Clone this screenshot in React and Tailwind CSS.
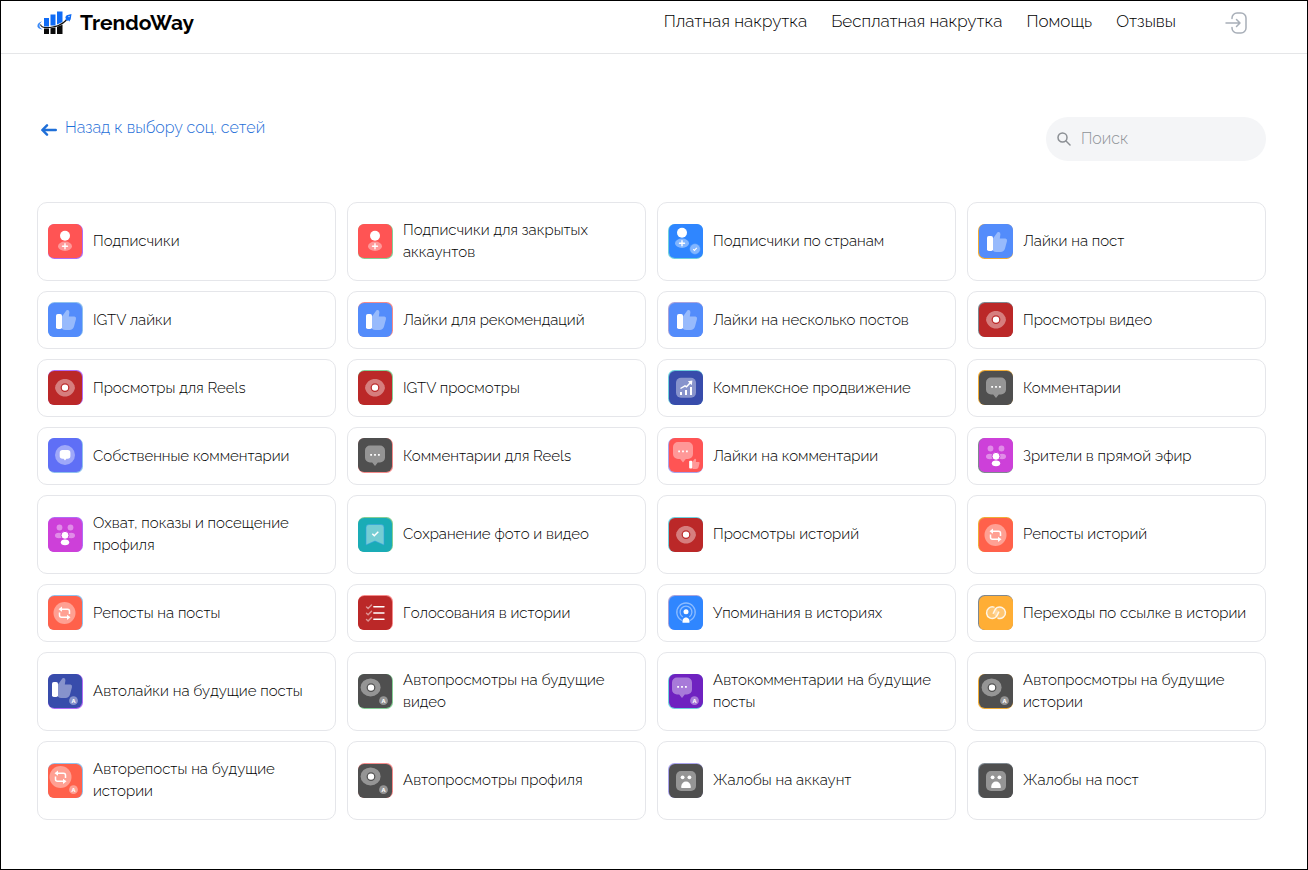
const NAV = ["Платная накрутка", "Бесплатная накрутка", "Помощь", "Отзывы"];

// edge: which sides of the tile show the accent colour (l/r + t/b)
const SERVICES = [
    { title: "Подписчики", icon: "follower", bg: "#ff5454", accent: "#b06cf5", edge: "rb" },
    { title: "Подписчики для закрытых аккаунтов", icon: "follower", bg: "#ff5454", accent: "#84cf95", edge: "rb" },
    { title: "Подписчики по странам", icon: "country", bg: "#2f86ff", accent: "#6fd0dd", edge: "lb" },
    { title: "Лайки на пост", icon: "like", bg: "#538cfb", accent: "#f0ac35", edge: "lb" },
    { title: "IGTV лайки", icon: "like", bg: "#538cfb", accent: "#8fc1ee", edge: "rt" },
    { title: "Лайки для рекомендаций", icon: "like", bg: "#538cfb", accent: "#f58a8a", edge: "rt" },
    { title: "Лайки на несколько постов", icon: "like", bg: "#538cfb", accent: "#a9a3dc", edge: "lt" },
    { title: "Просмотры видео", icon: "eye", bg: "#bb2828", accent: "#7f8890", edge: "lt" },
    { title: "Просмотры для Reels", icon: "eye", bg: "#bb2828", accent: "#b06cf5", edge: "rt" },
    { title: "IGTV просмотры", icon: "eye", bg: "#bb2828", accent: "#84cf95", edge: "rt" },
    { title: "Комплексное продвижение", icon: "growth", bg: "#384cab", accent: "#6fd0dd", edge: "lt" },
    { title: "Комментарии", icon: "comment", bg: "#4f4f4f", accent: "#f0ac35", edge: "lt" },
    { title: "Собственные комментарии", icon: "ownComment", bg: "#5f6ff6", accent: "#8fc1ee", edge: "rb" },
    { title: "Комментарии для Reels", icon: "comment", bg: "#4f4f4f", accent: "#f58a8a", edge: "rb" },
    { title: "Лайки на комментарии", icon: "commentLike", bg: "#ff5454", accent: "#a9a3ec", edge: "lb" },
    { title: "Зрители в прямой эфир", icon: "people", bg: "#cd40d9", accent: "#7f8890", edge: "lb" },
    { title: "Охват, показы и посещение профиля", icon: "people", bg: "#cd40d9", accent: "#b06cf5", edge: "rt" },
    { title: "Сохранение фото и видео", icon: "bookmark", bg: "#1aacb6", accent: "#84cf95", edge: "rt" },
    { title: "Просмотры историй", icon: "eye", bg: "#bb2828", accent: "#6fd0dd", edge: "lt" },
    { title: "Репосты историй", icon: "repost", bg: "#ff614b", accent: "#f0ac35", edge: "lt" },
    { title: "Репосты на посты", icon: "repost", bg: "#ff614b", accent: "#8fc1ee", edge: "rt" },
    { title: "Голосования в истории", icon: "poll", bg: "#bb2828", accent: "#f58a8a", edge: "rt" },
    { title: "Упоминания в историях", icon: "mention", bg: "#2f86ff", accent: "#a9a3dc", edge: "lt" },
    { title: "Переходы по ссылке в истории", icon: "link", bg: "#ffae35", accent: "#7f8890", edge: "lt" },
    { title: "Автолайки на будущие посты", icon: "like", auto: true, bg: "#384cab", accent: "#b06cf5", edge: "rb" },
    { title: "Автопросмотры на будущие видео", icon: "eye", auto: true, bg: "#4f4f4f", accent: "#84cf95", edge: "rb" },
    { title: "Автокомментарии на будущие посты", icon: "comment", auto: true, bg: "#6f22c0", accent: "#6fd0dd", edge: "lb" },
    { title: "Автопросмотры на будущие истории", icon: "eye", auto: true, bg: "#4f4f4f", accent: "#f0ac35", edge: "lb" },
    { title: "Авторепосты на будущие истории", icon: "repost", auto: true, bg: "#ff614b", accent: "#8fc1ee", edge: "rt" },
    { title: "Автопросмотры профиля", icon: "eye", auto: true, bg: "#4f4f4f", accent: "#f58a8a", edge: "rt" },
    { title: "Жалобы на аккаунт", icon: "complaint", bg: "#4f4f4f", accent: "#a9a3ec", edge: "lt" },
    { title: "Жалобы на пост", icon: "complaint", bg: "#4f4f4f", accent: "#7f8890", edge: "lt" },
];

const BUBBLE = "M12 7.5h10a5 5 0 0 1 5 5v7a5 5 0 0 1-5 5h-2.2L17 28l-2.8-3.5H12a5 5 0 0 1-5-5v-7a5 5 0 0 1 5-5Z";
const THUMB = "M14 14.5 17.6 9.4Q18.6 7.8 19.8 8q1.8.4 1.6 2.6l-.6 4h5.6q2 .2 1.6 2.4l-2 7.4Q25 27.800 21.500 28h-4Q15.200 28 14 26.800Z";
const EYE = "M17 9c4.6 0 7.6 2.4 9.4 6.3q1 2.3 0 4.6C24.6 23.8 21.6 26.4 17 26.4S9.4 23.8 7.6 19.9q-1-2.3 0-4.6C9.4 11.4 12.4 9 17 9Z";

function Thumb() {
    return (
        <>
            <rect x="8" y="12" width="6" height="15" rx="1.8" fill="#fff" />
            <path d={THUMB} fill="#fff" fillOpacity=".4" />
        </>
    );
}

function Follower() {
    return (
        <>
            <circle cx="17" cy="11.7" r="5" fill="#fff" />
            <ellipse cx="17" cy="22.3" rx="7" ry="4.7" fill="#fff" fillOpacity=".4" />
            <path d="M17 19.8v5M14.5 22.3h5" stroke="#fff" strokeWidth="1.4" strokeLinecap="round" />
        </>
    );
}

function Bubble() {
    return (
        <>
            <path d={BUBBLE} fill="#fff" fillOpacity=".4" />
            <path d="M12.2 16h1.8v1.8h-1.8zM16.1 16h1.8v1.8h-1.8zM20 16h1.8v1.8H20z" fill="#fff" />
        </>
    );
}

const GLYPHS = {
    follower: () => <Follower />,
    country: ({ bg }) => (
        <>
            <g transform="translate(-4 -3)">
                <Follower />
            </g>
            <circle cx="26" cy="25" r="5.4" fill="#fff" fillOpacity=".4" stroke={bg} strokeWidth=".5" />
            <path d="m24.2 25.2 1.2 1.2 2.4-2.6" fill="none" stroke="#fff" strokeWidth="1.1" />
        </>
    ),
    like: () => <Thumb />,
    eye: ({ bg, auto }) => (
        <>
            {auto
                ? <ellipse cx="16.6" cy="17.4" rx="10" ry="9" fill="#fff" fillOpacity=".4" />
                : <path d={EYE} fill="#fff" fillOpacity=".4" />}
            <circle cx="17" cy="17.6" r="3.8" fill="#fff" stroke={bg} strokeWidth="1.2" />
        </>
    ),
    growth: () => (
        <>
            <rect x="7" y="7.7" width="20" height="20" rx="5" fill="#fff" fillOpacity=".4" />
            <path d="M12 22v3M17 20v5M22 17v8" stroke="#fff" strokeWidth="2" />
            <path d="m11.5 18.5 4.5-2.7 1.5 1 4-4.3" fill="none" stroke="#fff" strokeWidth="1.4" />
            <path d="m18.800 11.200 4.600-.6-.6 4.600Z" fill="#fff" />
        </>
    ),
    comment: () => <Bubble />,
    ownComment: () => (
        <>
            <circle cx="17" cy="17" r="10" fill="#fff" fillOpacity=".4" />
            <path d="M14.500 12h5.200a2.700 2.700 0 0 1 2.700 2.700V18a2.800 2.800 0 0 1-2.700 2.800h-1.300L17 22.400l-1.400-1.600h-1.100a2.800 2.800 0 0 1-2.800-2.800v-3.300a2.800 2.800 0 0 1 2.800-2.700Z" fill="#fff" />
        </>
    ),
    commentLike: () => (
        <>
            <g transform="translate(-3 -3.5)">
                <Bubble />
            </g>
            <g transform="translate(16 16.5) scale(.52)">
                <Thumb />
            </g>
        </>
    ),
    people: ({ bg }) => (
        <>
            <g fill="#fff" fillOpacity=".4">
                <circle cx="11.5" cy="10.5" r="2.9" />
                <circle cx="22.5" cy="10.5" r="2.9" />
                <ellipse cx="10.8" cy="18.5" rx="3.8" ry="2.8" />
                <ellipse cx="23.2" cy="18.5" rx="3.8" ry="2.8" />
            </g>
            <circle cx="17" cy="18.3" r="4" fill="#fff" stroke={bg} strokeWidth="1" />
            <ellipse cx="17" cy="25.3" rx="4.2" ry="2.9" fill="#fff" />
        </>
    ),
    bookmark: () => (
        <>
            <path d="M11 7.500h12a3 3 0 0 1 3 3V28l-9-4-9 4V10.500a3 3 0 0 1 3-3Z" fill="#fff" fillOpacity=".4" stroke="#2f9fe0" strokeWidth=".6" />
            <path d="m14.300 16.800 2 2 4-4" fill="none" stroke="#fff" strokeWidth="1.500" />
        </>
    ),
    repost: () => (
        <>
            <circle cx="16.5" cy="18" r="11" fill="#fff" fillOpacity=".4" />
            <g fill="none" stroke="#fff" strokeWidth="1.5">
                <path d="M13.500 14.200h6a2 2 0 0 1 2 2V19" />
                <path d="M19.500 22.300h-6a2 2 0 0 1-2-2V17.500" />
            </g>
            <path d="m10.500 14.200 3.500-2.600v5.200ZM22.500 22.300l-3.500-2.600v5.200Z" fill="#fff" />
        </>
    ),
    poll: () => (
        <>
            <path d="M15.8 11.7H26M15.8 18H26M15.8 24.3H26" stroke="#fff" strokeWidth="1.4" strokeLinecap="round" />
            <path d="m8.500 12 1.600 1.500 3.400-3.600M8.500 18.300l1.600 1.500 3.400-3.600M8.500 24.600l1.600 1.500 3.400-3.600" fill="none" stroke="#fff" strokeOpacity=".5" strokeWidth="1.400" strokeLinecap="round" />
        </>
    ),
    mention: () => (
        <>
            <g fill="none" stroke="#fff" strokeOpacity=".45" strokeWidth="1.3" strokeLinecap="round">
                <path d="M12.500 25.200a9.200 9.200 0 1 1 9 0" />
                <path d="M13.300 21.600a5.900 5.900 0 1 1 7.400 0" />
            </g>
            <circle cx="17" cy="16.8" r="2.5" fill="#fff" />
            <path d="M13.600 27.800c-.6-3 .8-5.400 3.400-5.400s4 2.400 3.400 5.400Z" fill="#fff" />
        </>
    ),
    link: () => (
        <>
            <g fill="#fff" fillOpacity=".3">
                <circle cx="13.2" cy="17.7" r="5.8" />
                <circle cx="20.8" cy="17.7" r="5.8" />
            </g>
            <g fill="none" stroke="#fff" strokeOpacity=".85" strokeWidth="1.5" strokeLinecap="round">
                <path d="M15 12.100a5.800 5.800 0 1 0 1.200 10.600q1.300-.8 2.300-3l1.200-2.600" />
                <path d="M19 23.300a5.800 5.800 0 1 0-1.200-10.600q-1.300.8-2.300 3l-1.200 2.600" />
            </g>
        </>
    ),
    complaint: () => (
        <>
            <rect x="7" y="8" width="20" height="20" rx="5" fill="#fff" fillOpacity=".4" />
            <circle cx="13.6" cy="14.3" r="1.9" fill="#fff" />
            <circle cx="20.4" cy="14.3" r="1.9" fill="#fff" />
            <path d="M12.300 25v-1.700a4.700 4.700 0 0 1 9.400 0V25Z" fill="#fff" />
        </>
    ),
};

function ServiceIcon({ icon, bg, accent, edge, auto }) {
    const Glyph = GLYPHS[icon];
    const left = edge[0] === "l";
    const top = edge[1] === "t";
    return (
        <svg className="mb-px size-[35px] shrink-0" viewBox="0 0 35 35" aria-hidden="true">
            <rect width="35" height="35" rx="6.5" fill={accent} />
            <rect x={left ? 1 : 0} y={top ? 1 : 0} width="34" height="34" rx="6" fill={bg} />
            <g transform={left ? "translate(1 0)" : undefined}>
                <g transform={auto ? "translate(-4 -4)" : undefined}>
                    <Glyph bg={bg} auto={auto} />
                </g>
                {auto && (
                    <>
                        <circle cx="25.5" cy="26.700" r="4.4" fill="#fff" fillOpacity=".4" />
                        <text x="25.5" y="29" textAnchor="middle" fill="#fff" className="text-[6px] font-extrabold">A</text>
                    </>
                )}
            </g>
        </svg>
    );
}

function Logo() {
    return (
        <a href="#" className="flex items-center gap-2">
            <svg className="h-6 w-[35px]" viewBox="0 0 35 24" aria-hidden="true">
                <path d="M7 7h5v8.500H7zM13.500 3.500h5V14.500h-5zM20 .5h5.500V11L20 13.500z" fill="#0f6bf5" />
                <path d="M7 17.500h5V23H7zM13.500 17.300l5-.8V23h-5zM20 15.800l5.500-2V23H20z" fill="#0a0a0a" />
                <path d="M5 10.300C1 11.500-.3 14.500.8 16.200c1 1.500 2.600 2 4.700 2.300-2.400-1.500-3.300-3-2.900-4.500.3-1.500 1.100-2.500 2.400-3.700Z" fill="#3b8af7" />
                <path d="M3.500 13.500C4 16 8 17 13 16.500c6.500-.6 12.500-3.400 16.500-7.500" fill="none" stroke="#111" strokeWidth="1.200" />
                <path d="m34.500 3-4.800 1.300-1.700 2.200 1 .3-.6 1.700 1.600 1.300 1.800-.4.3 1.400 1.600-2.600Z" fill="#0f6bf5" />
                <circle cx="32" cy="5.600" r=".7" fill="#fff" />
            </svg>
            <span className="text-[21px] leading-7 font-bold">TrendoWay</span>
        </a>
    );
}

function LoginIcon() {
    return (
        <svg className="size-[22px]" viewBox="0 0 22 22" fill="none" stroke="currentColor" strokeWidth="1.5" strokeLinecap="round" strokeLinejoin="round" aria-hidden="true">
            <path d="M7 6.500V6a5 5 0 0 1 5-5h4a5 5 0 0 1 5 5v10a5 5 0 0 1-5 5h-4a5 5 0 0 1-5-5v-.5" />
            <path d="M1 11h13.500M11.500 7.500 15 11l-3.500 3.500" />
        </svg>
    );
}

export default function App() {
    return (
        <div className="min-h-screen border border-black bg-white font-['Raleway','Lato',sans-serif] font-light text-black">
            <header className="flex h-[53px] items-center justify-between border-b border-[#e5e6e8] pr-[60px] pb-2 pl-9">
                <Logo />
                <div className="flex items-center">
                    <nav className="flex gap-6 pb-1 text-[17px] leading-6">
                        {NAV.map((item) => (
                            <a key={item} href="#">{item}</a>
                        ))}
                    </nav>
                    <button type="button" aria-label="Войти" className="ml-[49px] text-[#a8afb8]">
                        <LoginIcon />
                    </button>
                </div>
            </header>

            <main className="pt-[63px] pr-[41px] pb-12 pl-9">
                <div className="flex items-start justify-between">
                    <a href="#" className="flex items-center gap-2 pl-1 text-base leading-[22px] text-[#1f6fd8]">
                        <svg className="mt-1 h-3 w-4" viewBox="0 0 16 12" fill="none" stroke="currentColor" strokeWidth="2.4" strokeLinecap="round" strokeLinejoin="round" aria-hidden="true">
                            <path d="M14.800 6H2M6 1.300 1.300 6 6 10.700" />
                        </svg>
                        Назад к выбору соц. сетей
                    </a>
                    <label className="flex h-11 w-[220px] items-center gap-2.5 rounded-full bg-[#f4f5f7] px-[11px]">
                        <svg className="size-[14px] shrink-0" viewBox="0 0 14 14" fill="none" stroke="#8b8f94" strokeWidth="1.5" strokeLinecap="round" aria-hidden="true">
                            <circle cx="5.5" cy="5.5" r="4.5" />
                            <path d="m9 9 4 4" />
                        </svg>
                        <input
                            type="search"
                            aria-label="Поиск"
                            placeholder="Поиск"
                            className="w-full min-w-0 bg-transparent text-base outline-none placeholder:text-[#8f9398]"
                        />
                    </label>
                </div>

                <div className="mt-[41px] grid grid-cols-4 gap-x-[11px] gap-y-2.5">
                    {SERVICES.map(({ title, ...icon }) => (
                        <a
                            key={title}
                            href="#"
                            className="flex min-h-[58px] items-center gap-2.5 rounded-[10px] border border-[#e5e6ea] px-2.5"
                        >
                            <ServiceIcon {...icon} />
                            <span className="pt-4 pb-[17px] text-[15px] leading-[22px]">{title}</span>
                        </a>
                    ))}
                </div>
            </main>
        </div>
    );
}
